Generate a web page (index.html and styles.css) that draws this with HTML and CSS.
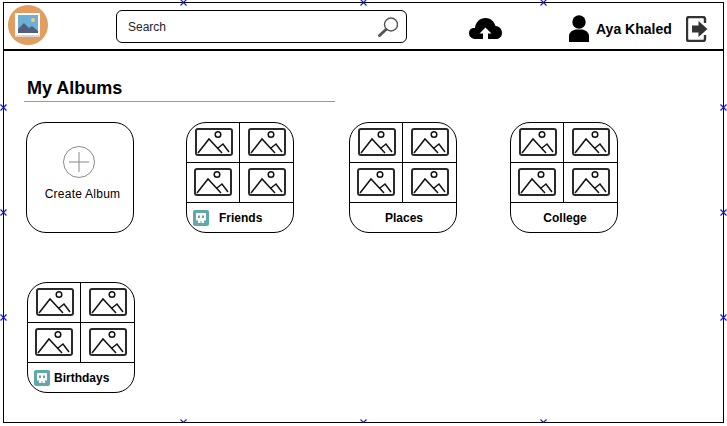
FILE: index.html
```html
<!DOCTYPE html>
<html lang="en">

<head>
    <meta charset="UTF-8">
    <meta name="viewport" content="width=device-width, initial-scale=1.0">
    <title>My Albums</title>
    <link rel="stylesheet" href="styles.css">
</head>

<body>
    <svg class="defs" width="0" height="0">
        <symbol id="photo" viewBox="0 0 38 28">
            <rect x="1" y="1" width="36" height="26" rx="2" fill="#fff" stroke="#2a2a2a" stroke-width="2"/>
            <circle cx="23" cy="6.5" r="2.8" fill="none" stroke="#111" stroke-width="1.5"/>
            <path d="M3 25 L14 11 L27 25 M23 20 L28 16 L34 24" fill="none" stroke="#111" stroke-width="1.5"/>
        </symbol>
        <symbol id="tag" viewBox="0 0 16 16">
            <rect width="16" height="16" rx="2" fill="#5fa8ab"/>
            <path d="M3 3.5 Q3 3 3.5 3 H12.5 Q13 3 13 3.5 V10 Q13 10.5 12.5 10.5 H11 V13 H8.5 V11 H7.5 V13 H5 V10.5 H3.5 Q3 10.5 3 10 Z" fill="#fff"/>
            <rect x="5" y="5.5" width="2" height="2.5" fill="#5fa8ab"/>
            <rect x="9" y="5.5" width="2" height="2.5" fill="#5fa8ab"/>
        </symbol>
        <symbol id="mark" viewBox="0 0 7 7">
            <path d="M0.5 0.5 L6.5 6.5 M6.5 0.5 L0.5 6.5" stroke="#1a1acc" stroke-width="1.2"/>
        </symbol>
    </svg>

    <div class="frame">
        <header class="topbar">
            <svg class="logo" viewBox="0 0 40 40">
                <circle cx="20" cy="20" r="20" fill="#e29d60"/>
                <rect x="7" y="8" width="25" height="24" fill="#fff"/>
                <rect x="7" y="30" width="25" height="2" fill="#d8d8d8"/>
                <rect x="10" y="10" width="20" height="18" fill="#6cb0d8"/>
                <circle cx="25" cy="15" r="2" fill="#f6cd72"/>
                <path d="M10 28 V24 L16 18 L21 23 L24 21 L30 26 V28 Z" fill="#515f7d"/>
            </svg>

            <div class="search">
                <span>Search</span>
                <svg class="search-icon" viewBox="0 0 20 20">
                    <circle cx="13" cy="7.5" r="6.5" fill="#fff" stroke="#555" stroke-width="1.4"/>
                    <path d="M8 12.5 L1.5 18.5" stroke="#555" stroke-width="3" stroke-linecap="round"/>
                </svg>
            </div>

            <svg class="upload" viewBox="0 0 33 21">
                <path d="M7 21 C2.5 21 0 18.5 0 15 C0 11.5 3 9.5 6 10 C6.5 4 11 0 16.5 0 C21.5 0 25 3 26.5 8 C30 8 33 11 33 15 C33 18.5 30.5 21 27 21 Z" fill="#000"/>
                <path d="M16.5 9.5 L22.5 15.5 H19 V21 H14 V15.5 H10.5 Z" fill="#fff"/>
            </svg>

            <svg class="person" viewBox="0 0 20 27">
                <circle cx="10" cy="7" r="6.7" fill="#000"/>
                <path d="M0 27 V21 C0 17.5 3 15.5 6.5 14.5 H13.5 C17 15.5 20 17.5 20 21 V27 Z" fill="#000"/>
            </svg>
            <span class="username">Aya Khaled</span>

            <svg class="logout" viewBox="0 0 22 26">
                <path d="M19 7 V3 Q19 1 17 1 H3 Q1 1 1 3 V23 Q1 25 3 25 H17 Q19 25 19 23 V19" fill="none" stroke="#333" stroke-width="2.4"/>
                <path d="M6 9.5 H12.5 V5 L21.5 13 L12.5 21 V16.5 H6 Z" fill="#333"/>
            </svg>
        </header>

        <main class="content">
            <h1 class="page-title">My Albums</h1>

            <div class="albums">
                <div class="card create">
                    <svg class="plus" viewBox="0 0 32 32">
                        <circle cx="16" cy="16" r="15.5" fill="none" stroke="#888"/>
                        <path d="M16 6 V26 M6 16 H26" stroke="#888"/>
                    </svg>
                    <span class="create-text">Create Album</span>
                </div>

                <div class="card">
                    <div class="photos">
                        <div class="cell"><svg class="photo"><use href="#photo"/></svg></div>
                        <div class="cell"><svg class="photo"><use href="#photo"/></svg></div>
                        <div class="cell"><svg class="photo"><use href="#photo"/></svg></div>
                        <div class="cell"><svg class="photo"><use href="#photo"/></svg></div>
                    </div>
                    <div class="label label-wide"><svg class="tag"><use href="#tag"/></svg>Friends</div>
                </div>

                <div class="card">
                    <div class="photos">
                        <div class="cell"><svg class="photo"><use href="#photo"/></svg></div>
                        <div class="cell"><svg class="photo"><use href="#photo"/></svg></div>
                        <div class="cell"><svg class="photo"><use href="#photo"/></svg></div>
                        <div class="cell"><svg class="photo"><use href="#photo"/></svg></div>
                    </div>
                    <div class="label label-center">Places</div>
                </div>

                <div class="card">
                    <div class="photos">
                        <div class="cell"><svg class="photo"><use href="#photo"/></svg></div>
                        <div class="cell"><svg class="photo"><use href="#photo"/></svg></div>
                        <div class="cell"><svg class="photo"><use href="#photo"/></svg></div>
                        <div class="cell"><svg class="photo"><use href="#photo"/></svg></div>
                    </div>
                    <div class="label label-center">College</div>
                </div>

                <div class="card card-nudge">
                    <div class="photos">
                        <div class="cell"><svg class="photo"><use href="#photo"/></svg></div>
                        <div class="cell"><svg class="photo"><use href="#photo"/></svg></div>
                        <div class="cell"><svg class="photo"><use href="#photo"/></svg></div>
                        <div class="cell"><svg class="photo"><use href="#photo"/></svg></div>
                    </div>
                    <div class="label"><svg class="tag"><use href="#tag"/></svg>Birthdays</div>
                </div>
            </div>
        </main>

        <!-- selection handles on the frame -->
        <svg class="mark top x1"><use href="#mark"/></svg>
        <svg class="mark top x2"><use href="#mark"/></svg>
        <svg class="mark top x3"><use href="#mark"/></svg>
        <svg class="mark bottom x1"><use href="#mark"/></svg>
        <svg class="mark bottom x2"><use href="#mark"/></svg>
        <svg class="mark bottom x3"><use href="#mark"/></svg>
        <svg class="mark left y1"><use href="#mark"/></svg>
        <svg class="mark left y2"><use href="#mark"/></svg>
        <svg class="mark left y3"><use href="#mark"/></svg>
        <svg class="mark right y1"><use href="#mark"/></svg>
        <svg class="mark right y2"><use href="#mark"/></svg>
        <svg class="mark right y3"><use href="#mark"/></svg>
    </div>
</body>

</html>
```

FILE: styles.css
```css
body {
    font-family: 'Liberation Sans', Arial, sans-serif;
    background: #fff;
    color: #000;
    margin: 0;
    padding: 0;
}

.defs {
    position: absolute;
}

.frame {
    position: relative;
    box-sizing: border-box;
    width: 721px;
    height: 421px;
    margin: 2px 0 0 3px;
    border: 1px solid #000;
}

.topbar {
    display: flex;
    align-items: flex-start;
    height: 46px;
    border-bottom: 2px solid #000;
}

.logo {
    width: 40px;
    height: 40px;
    margin: 2px 0 0 4px;
}

.search {
    display: flex;
    align-items: center;
    justify-content: space-between;
    box-sizing: border-box;
    width: 291px;
    height: 33px;
    margin: 7px 0 0 68px;
    padding: 0 8px 0 11px;
    border: 1px solid #000;
    border-radius: 6px;
    font-size: 12px;
    color: #222;
}

.search-icon {
    width: 20px;
    height: 20px;
}

.upload {
    width: 33px;
    height: 21px;
    margin: 15px 0 0 62px;
}

.person {
    width: 20px;
    height: 27px;
    margin: 12px 0 0 67px;
}

.username {
    width: 76px;
    margin: 18px 0 0 7px;
    font-size: 14px;
    font-weight: bold;
    white-space: nowrap;
}

.logout {
    width: 22px;
    height: 26px;
    margin: 13px 0 0 14px;
}

.content {
    padding: 26px 0 0 20px;
}

.page-title {
    width: 308px;
    margin: 0;
    padding: 0 0 2px 3px;
    border-bottom: 1px solid #999;
    font-size: 18px;
    line-height: 22px;
    font-weight: bold;
}

.albums {
    display: grid;
    grid-template-columns: 160px 163px 161px 108px;
    row-gap: 49px;
    margin: 20px 0 0 2px;
}

.card {
    box-sizing: border-box;
    display: flex;
    flex-direction: column;
    width: 108px;
    height: 111px;
    border: 1px solid #000;
    border-radius: 20px;
    overflow: hidden;
    font-size: 12px;
}

.card-nudge {
    margin-left: 1px;
}

.create {
    align-items: center;
    padding-top: 23px;
}

.plus {
    width: 32px;
    height: 32px;
    margin: 0 2px 9px 0;
}

.create-text {
    margin-left: 5px;
    letter-spacing: 0.25px;
}

.photos {
    display: grid;
    grid-template-columns: 53px 1fr;
    grid-template-rows: 40px 40px;
}

.cell {
    display: flex;
    align-items: center;
    justify-content: center;
    padding-bottom: 1px;
    border-bottom: 1px solid #000;
}

.cell:nth-child(odd) {
    padding-left: 1px;
    border-right: 1px solid #000;
}

/* bottom left picture sits a pixel further left */
.cell:nth-child(3) {
    padding-left: 0;
    padding-right: 1px;
}

.photo {
    width: 38px;
    height: 28px;
}

.label {
    flex: 1;
    display: flex;
    align-items: center;
    gap: 4px;
    padding-left: 6px;
    font-weight: bold;
}

.label-wide {
    gap: 10px;
}

.label-center {
    justify-content: center;
    padding-left: 2px;
}

.tag {
    width: 16px;
    height: 16px;
}

.mark {
    position: absolute;
    width: 7px;
    height: 7px;
}

.top { top: -4px; }
.bottom { bottom: -4px; }
.left { left: -4px; }
.right { right: -4px; }
.x1 { left: 176px; }
.x2 { left: 356px; }
.x3 { left: 536px; }
.y1 { top: 101px; }
.y2 { top: 206px; }
.y3 { top: 311px; }
```
